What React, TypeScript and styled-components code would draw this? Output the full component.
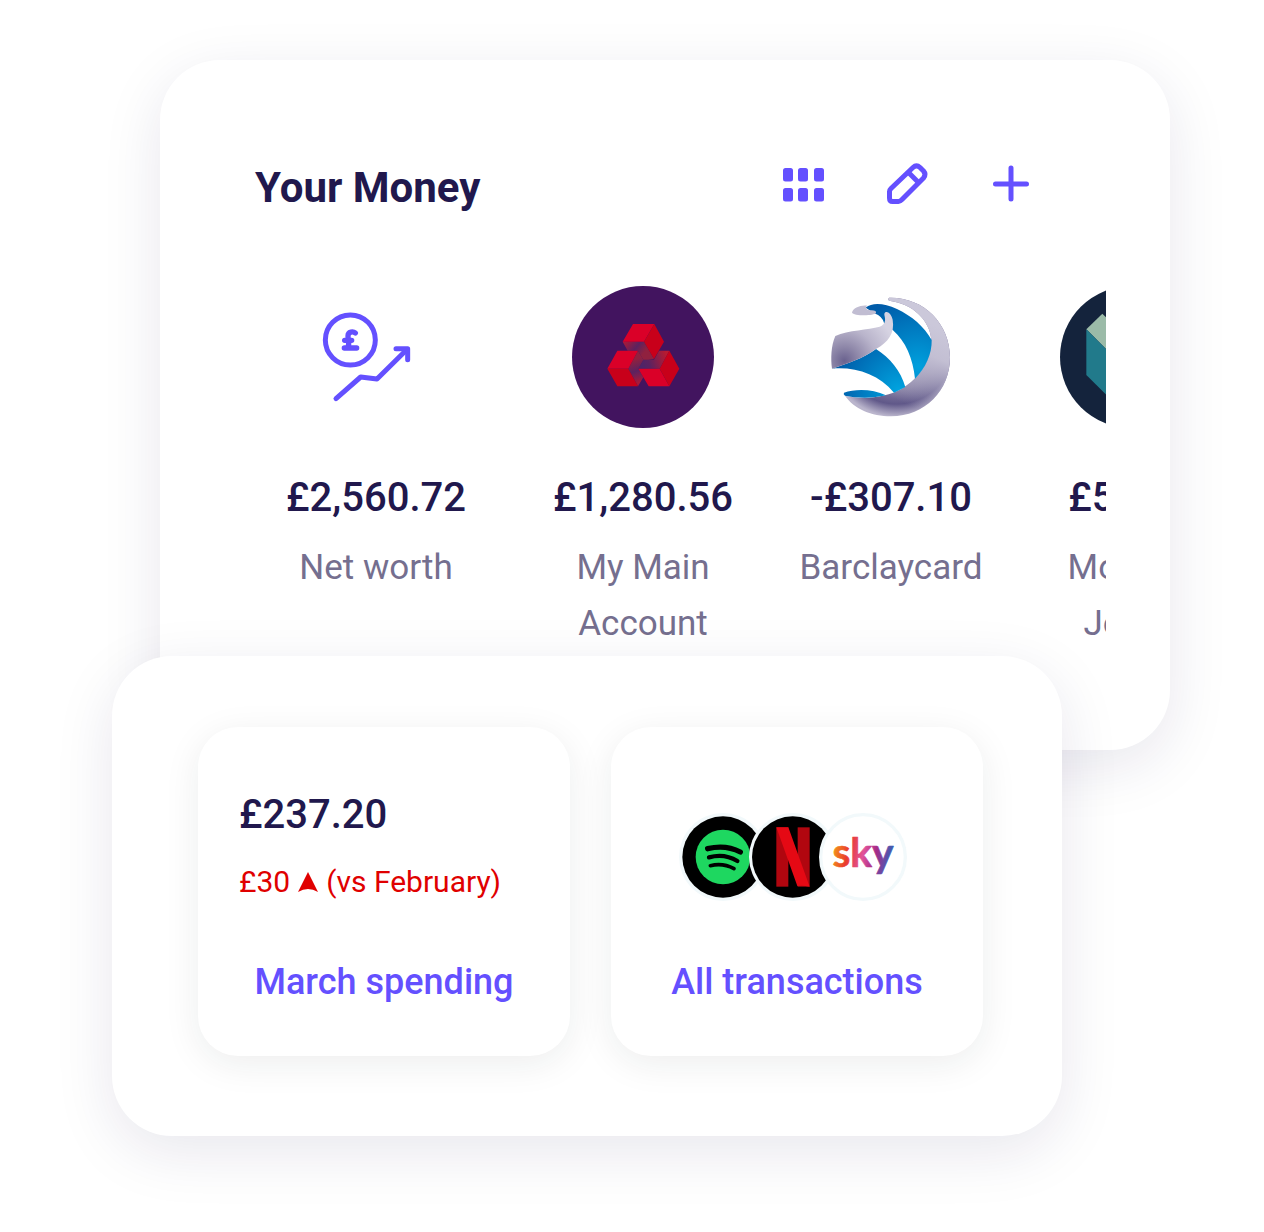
import React from "react";
import styled, { createGlobalStyle } from "styled-components";

const ink = "#21184d";
const violet = "#6450ff";
const muted = "#756f8f";
const red = "#e00000";

const GlobalStyle = createGlobalStyle`
  *, *::before, *::after { box-sizing: border-box; }
  body {
    margin: 0;
    background: #fff;
    color: ${ink};
    font-family: Roboto, "Liberation Sans", sans-serif;
  }
  h1, p, ul { margin: 0; padding: 0; }
`;

const Page = styled.main`
  min-width: 900px;
  padding: 60px 94px 96px 112px;
`;

const MoneyCard = styled.section`
  margin-left: 48px;
  min-height: 690px;
  padding: 100px 64px 0 95px;
  border-radius: 60px;
  background: #fff;
  box-shadow: 0 16px 60px rgba(33, 24, 77, 0.1);
`;

const Header = styled.header`
  display: flex;
  align-items: flex-start;
  justify-content: space-between;
  padding-right: 71px;
`;

const Title = styled.h1`
  font-size: 42px;
  line-height: 56px;
  font-weight: 700;
`;

const Actions = styled.div`
  display: flex;
  gap: 56px;
`;

const IconButton = styled.button`
  display: block;
  width: 48px;
  height: 48px;
  padding: 0;
  border: 0;
  background: none;
  color: ${violet};
  cursor: pointer;

  svg { display: block; }
`;

const Accounts = styled.ul`
  display: flex;
  overflow: hidden;
  list-style: none;
  margin-top: 70px;
`;

const Account = styled.li<{ $width: number }>`
  flex: 0 0 ${(p) => p.$width}px;
  display: flex;
  flex-direction: column;
  align-items: center;
  text-align: center;
`;

const Emblem = styled.svg`
  display: block;
  width: 142px;
  height: 142px;
`;

const Amount = styled.p`
  font-size: 40px;
  line-height: 48px;
  font-weight: 500;
`;

const AccountAmount = styled(Amount)`
  margin-top: 46px;
`;

const AccountName = styled.p`
  width: 190px;
  margin-top: 18px;
  font-size: 35px;
  line-height: 56px;
  color: ${muted};
`;

const SummaryCard = styled.section`
  position: relative;
  display: grid;
  grid-template-columns: 1fr 1fr;
  gap: 41px;
  margin: -94px 108px 0 0;
  padding: 71px 79px 80px 86px;
  border-radius: 60px;
  background: #fff;
  box-shadow: 0 16px 60px rgba(33, 24, 77, 0.1);
`;

const Tile = styled.article`
  display: flex;
  flex-direction: column;
  height: 329px;
  padding: 64px 41px 48px;
  border-radius: 40px;
  background: #fff;
  box-shadow: 0 8px 36px rgba(20, 40, 40, 0.08);
`;

const Change = styled.p`
  display: flex;
  align-items: center;
  gap: 8px;
  margin-top: 23px;
  font-size: 30px;
  line-height: 40px;
  white-space: nowrap;
  color: ${red};
`;

const TileLink = styled.a`
  margin-top: auto;
  font-size: 36px;
  line-height: 52px;
  font-weight: 500;
  text-align: center;
  text-decoration: none;
  white-space: nowrap;
  color: ${violet};
`;

const Merchants = styled.div`
  display: flex;
  justify-content: center;
  margin-top: 22px;
  padding-right: 8px;
`;

const Merchant = styled.svg`
  display: block;
  width: 88px;
  height: 88px;
  flex: none;

  & + & { margin-left: -18px; }
`;

const GridIcon = () => (
  <svg width="48" height="48" viewBox="0 0 48 48" fill="currentColor" aria-hidden="true">
    {[8, 28].map((y) => [4, 19, 35].map((x) => (
      <rect key={`${x}-${y}`} x={x} y={y} width="10" height="13.5" rx="2.5" />
    )))}
  </svg>
);

const PencilIcon = () => (
  <svg width="48" height="48" viewBox="0 0 48 48" fill="none" stroke="currentColor" strokeWidth="5" strokeLinejoin="round" aria-hidden="true">
    <path d="M6.500 38V31.500Q6.500 30 8 28.500L30 7.500Q33.500 4.200 37 7.500L40.500 11Q43.500 14.500 40.500 18L19 39.500Q17 41.500 15.500 41.500H9.500Q6.500 41.500 6.500 38Z" />
    <path d="M25.500 12.500L35.500 22.500" />
  </svg>
);

const PlusIcon = () => (
  <svg width="48" height="48" viewBox="0 0 48 48" fill="none" stroke="currentColor" strokeWidth="5" strokeLinecap="round" aria-hidden="true">
    <path d="M24 8V39M8.500 24H39.500" />
  </svg>
);

const NetWorthEmblem = () => (
  <Emblem viewBox="15 -12 426 426" aria-hidden="true">
    <g fill="none" stroke={violet} strokeWidth="15" strokeLinecap="round" strokeLinejoin="round">
      <circle cx="151" cy="150" r="75" />
      <path d="M108 326L182 261L231 267L320 179" />
      <path d="M288 176H323V209" />
      <path d="M166 129C160 124 144 124 144 138C144 150 150 160 143 174M133 174H170M134 151H155" strokeWidth="16" />
    </g>
  </Emblem>
);

const NatWestEmblem = () => (
  <Emblem viewBox="34 33 426 426" aria-hidden="true">
    <defs>
      <linearGradient id="nw-a" gradientUnits="userSpaceOnUse" x1="195" y1="200" x2="245" y2="240">
        <stop offset="0" stopColor="#a51a3a" /><stop offset="0.55" stopColor="#5b2260" /><stop offset="1" stopColor="#90213f" />
      </linearGradient>
      <linearGradient id="nw-b" gradientUnits="userSpaceOnUse" x1="240" y1="320" x2="218" y2="255">
        <stop offset="0" stopColor="#a51a3a" /><stop offset="0.5" stopColor="#5b2260" /><stop offset="1" stopColor="#90213f" />
      </linearGradient>
      <linearGradient id="nw-c" gradientUnits="userSpaceOnUse" x1="318" y1="240" x2="240" y2="265">
        <stop offset="0" stopColor="#b91a30" /><stop offset="0.7" stopColor="#5b2260" /><stop offset="1" stopColor="#4d2468" />
      </linearGradient>
    </defs>
    <circle cx="247" cy="246" r="213" fill="#42145f" />
    <path d="M295 227H326L297 281H233L248 254H280Z" fill="url(#nw-c)" />
    <path d="M186 200H250L280 252L263 254H248L232 227H201Z" fill="url(#nw-a)" />
    <path d="M232 227L248 254L233 281L248 307L232 334L203 281Z" fill="url(#nw-b)" />
    <path d="M217 147H281L250 200H186ZM170 227H232L203 281H140ZM233 281H297L326 334H264Z" fill="#da0028" />
    <path d="M281 147L310 200L280 252L250 200ZM140 281H203L232 334H170ZM326 227L356 281L326 334L297 281Z" fill="#c8001a" />
  </Emblem>
);

const BarclaycardEmblem = () => (
  <Emblem viewBox="15 18 426 426" aria-hidden="true">
    <defs>
      <radialGradient id="bc-ring" gradientUnits="userSpaceOnUse" cx="245" cy="200" r="210">
        <stop offset="0" stopColor="#cbc7da" /><stop offset="0.62" stopColor="#817a9f" />
        <stop offset="0.82" stopColor="#605889" /><stop offset="1" stopColor="#bab5cc" />
      </radialGradient>
      <linearGradient id="bc-fade" gradientUnits="userSpaceOnUse" x1="370" y1="140" x2="270" y2="370">
        <stop offset="0" stopColor="#cbc8da" /><stop offset="0.35" stopColor="#c3bfd3" /><stop offset="1" stopColor="#c3bfd3" stopOpacity="0" />
      </linearGradient>
      <radialGradient id="bc-wing" gradientUnits="userSpaceOnUse" cx="88" cy="242" r="160">
        <stop offset="0" stopColor="#6a628f" /><stop offset="0.25" stopColor="#8d86a8" /><stop offset="0.6" stopColor="#b9b4cb" /><stop offset="1" stopColor="#d6d3e2" />
      </radialGradient>
      <radialGradient id="bc-blue1" gradientUnits="userSpaceOnUse" cx="310" cy="260" r="210">
        <stop offset="0" stopColor="#00a0dd" /><stop offset="1" stopColor="#005ca9" />
      </radialGradient>
      <radialGradient id="bc-blue2" gradientUnits="userSpaceOnUse" cx="250" cy="330" r="190">
        <stop offset="0" stopColor="#00a3df" /><stop offset="1" stopColor="#005ca9" />
      </radialGradient>
    </defs>
    <path d="M222 53C325 50 405 130 405 232C405 332 330 409 228 409C170 409 116 386 90 347C145 360 215 352 260 326C312 297 350 240 349 180C345 120 292 70 222 62Q217 57 222 53Z" fill="url(#bc-ring)" />
    <path d="M222 53C325 50 405 130 405 232C405 332 330 409 228 409C170 409 116 386 90 347C145 360 215 352 260 326C312 297 350 240 349 180C345 120 292 70 222 62Q217 57 222 53Z" fill="url(#bc-fade)" />
    <path d="M152 83C172 67 206 69 246 87C290 108 328 140 350 180C351 222 332 264 300 296C294 236 272 184 234 151L208 131Q203 109 178 100Z" fill="url(#bc-blue1)" />
    <path d="M183 207C224 232 258 274 271 321L237 338C190 282 121 260 51 266C98 251 142 236 183 207Z" fill="url(#bc-blue2)" />
    <path d="M87 338C120 326 173 326 213 346C170 356 122 354 90 347Q84 342 87 338Z" fill="url(#bc-blue2)" />
    <path d="M61 168C100 150 160 150 194 140Q208 134 210 122C212 111 204 102 211 97C219 93 229 103 233 119C240 160 219 187 183 207C142 236 98 251 51 266C47 237 48 196 61 168Z" fill="url(#bc-wing)" />
    <path d="M111 98C113 84 138 74 157 77C148 83 154 91 170 91Q185 91 183 99C178 108 115 108 111 98Z" fill="#c1bdd2" />
  </Emblem>
);

const MonzoEmblem = () => (
  <Emblem viewBox="60 48 426 426" aria-hidden="true">
    <circle cx="273" cy="261" r="213" fill="#14233c" />
    <path d="M139 178L187 131L273 217V312Z" fill="#9bbba8" />
    <path d="M139 178L273 312V448L139 315Z" fill="#217a8b" />
    <path d="M407 178L359 131L273 217V312Z" fill="#f8e7ce" />
    <path d="M407 178L273 312V448L407 315Z" fill="#e64b5f" />
  </Emblem>
);

const SpotifyLogo = () => (
  <Merchant viewBox="0 0 264 264" role="img" aria-label="Spotify">
    <circle cx="132" cy="132" r="132" fill="#f2f9fb" />
    <circle cx="132" cy="132" r="122" fill="#000" />
    <circle cx="132" cy="132" r="82" fill="#1ed760" />
    <g fill="none" stroke="#000" strokeLinecap="round">
      <path d="M86 107Q140 94 184 117" strokeWidth="16" />
      <path d="M90 133Q136 120 175 144" strokeWidth="13" />
      <path d="M94 158Q132 149 165 167" strokeWidth="11" />
    </g>
  </Merchant>
);

const NetflixLogo = () => (
  <Merchant viewBox="0 0 264 264" role="img" aria-label="Netflix">
    <circle cx="132" cy="132" r="132" fill="#f2f9fb" />
    <circle cx="131" cy="132" r="122" fill="#000" />
    <rect x="82" y="43" width="36" height="178" fill="#b1060f" />
    <rect x="146" y="43" width="36" height="178" fill="#b1060f" />
    <path d="M82 43H118L182 221Q163 217 145 219Z" fill="#e50914" />
  </Merchant>
);

const SkyLogo = () => (
  <Merchant viewBox="0 0 264 264" role="img" aria-label="Sky">
    <defs>
      <linearGradient id="sky-fill" gradientUnits="userSpaceOnUse" x1="40" y1="110" x2="222" y2="150">
        <stop offset="0" stopColor="#f39a1a" /><stop offset="0.25" stopColor="#ea3b2e" />
        <stop offset="0.5" stopColor="#e0529a" /><stop offset="0.7" stopColor="#a52a86" />
        <stop offset="0.85" stopColor="#6b4aa5" /><stop offset="1" stopColor="#1f69b5" />
      </linearGradient>
    </defs>
    <circle cx="132" cy="132" r="127" fill="#fff" stroke="#f2f9fb" strokeWidth="10" />
    <text x="132" y="163" textAnchor="middle" fontFamily="Lato, sans-serif" fontSize="122" fontWeight="700" fill="url(#sky-fill)" stroke="url(#sky-fill)" strokeWidth="2" strokeLinejoin="round">sky</text>
  </Merchant>
);

const accounts = [
  { width: 242, emblem: <NetWorthEmblem />, amount: "£2,560.72", name: "Net worth" },
  { width: 292, emblem: <NatWestEmblem />, amount: "£1,280.56", name: "My Main Account" },
  { width: 204, emblem: <BarclaycardEmblem />, amount: "-£307.10", name: "Barclaycard" },
  { width: 276, emblem: <MonzoEmblem />, amount: "£57.20", name: "Monzo+ Jones" },
];

export default function App() {
  return (
    <>
      <GlobalStyle />
      <Page>
        <MoneyCard aria-labelledby="money-title">
          <Header>
            <Title id="money-title">Your Money</Title>
            <Actions>
              <IconButton type="button" aria-label="Grid view"><GridIcon /></IconButton>
              <IconButton type="button" aria-label="Edit"><PencilIcon /></IconButton>
              <IconButton type="button" aria-label="Add account"><PlusIcon /></IconButton>
            </Actions>
          </Header>
          <Accounts>
            {accounts.map((a) => (
              <Account key={a.name} $width={a.width}>
                {a.emblem}
                <AccountAmount>{a.amount}</AccountAmount>
                <AccountName>{a.name}</AccountName>
              </Account>
            ))}
          </Accounts>
        </MoneyCard>
        <SummaryCard aria-label="Activity">
          <Tile>
            <Amount>£237.20</Amount>
            <Change>
              £30
              <svg width="20" height="20" viewBox="0 0 20 20" fill="currentColor" role="img" aria-label="up">
                <path d="M10 0L20 20Q10 14 0 20Z" />
              </svg>
              (vs February)
            </Change>
            <TileLink href="#spending">March spending</TileLink>
          </Tile>
          <Tile>
            <Merchants>
              <SpotifyLogo />
              <NetflixLogo />
              <SkyLogo />
            </Merchants>
            <TileLink href="#transactions">All transactions</TileLink>
          </Tile>
        </SummaryCard>
      </Page>
    </>
  );
}
